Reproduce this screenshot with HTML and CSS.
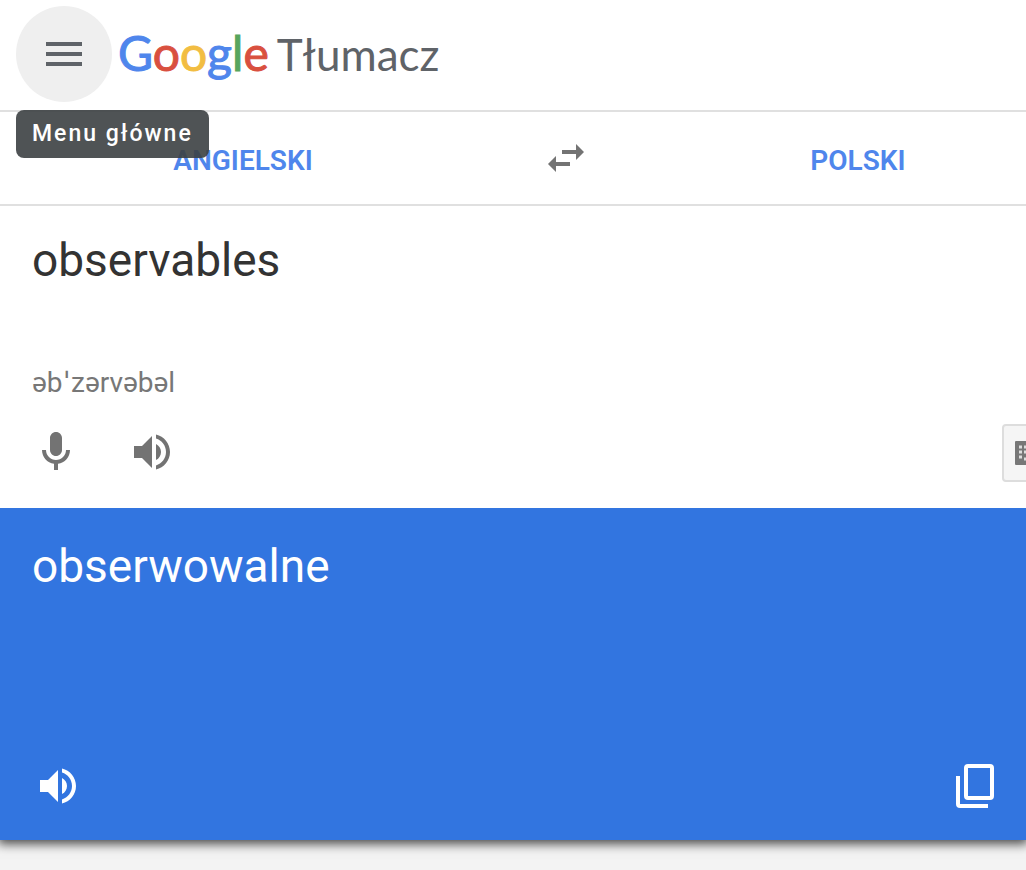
FILE: index.html
```html
<!DOCTYPE html>
<html lang="pl">
<head>
<meta charset="utf-8">
<meta name="viewport" content="width=device-width, initial-scale=1">
<title>Google Tłumacz</title>
<link rel="stylesheet" href="styles.css">
</head>
<body>
<header class="header">
  <div class="menu">
    <button class="menu-button" type="button" aria-describedby="menu-tip" aria-label="Menu główne">
      <svg width="48" height="48" viewBox="0 0 24 24" aria-hidden="true"><path d="M3 18h18v-2H3v2zm0-5h18v-2H3v2zm0-7v2h18V6H3z"/></svg>
    </button>
    <span class="tooltip" id="menu-tip" role="tooltip">Menu główne</span>
  </div>
  <a class="brand" href="#"><span class="brand-google"><span class="blue">G</span><span class="red">o</span><span class="yellow">o</span><span class="blue">g</span><span class="green">l</span><span class="red">e</span></span><span class="brand-product">Tłumacz</span></a>
</header>
<main>
  <div class="languages">
    <button class="language" type="button">ANGIELSKI</button>
    <button class="swap" type="button" aria-label="Zamień języki">
      <svg width="48" height="48" viewBox="0 0 24 24" aria-hidden="true"><path d="M6.99 11L3 15l3.99 4v-3H14v-2H6.99v-3zM21 9l-3.990-4v3H10v2h7.010v3L21 9z"/></svg>
    </button>
    <button class="language" type="button">POLSKI</button>
  </div>
  <section class="source">
    <textarea class="source-text" aria-label="Tekst źródłowy" spellcheck="false" rows="1">observables</textarea>
    <p class="phonetic">əb<span class="stress">ˈ</span>zərvəbəl</p>
    <div class="source-tools">
      <button class="tool" type="button" aria-label="Mów">
        <svg width="48" height="48" viewBox="0 0 24 24" aria-hidden="true"><path d="M12 14c1.660 0 3-1.340 3-3V5c0-1.660-1.340-3-3-3S9 3.340 9 5v6c0 1.660 1.340 3 3 3zM17 11c0 2.760-2.240 5-5 5s-5-2.240-5-5H5c0 3.530 2.610 6.430 6 6.920V21h2v-3.080c3.390-.49 6-3.390 6-6.920h-2z"/></svg>
      </button>
      <button class="tool" type="button" aria-label="Odsłuchaj">
        <svg width="48" height="48" viewBox="0 0 24 24" aria-hidden="true"><path d="M3 9v6h4l5 5V4L7 9H3zm13.500 3c0-1.770-1-3.290-2.500-4.030v8.050c1.500-.73 2.500-2.250 2.500-4.020zM14 3.230v2.060c2.890.86 5 3.540 5 6.710s-2.110 5.850-5 6.710v2.060c4.010-.91 7-4.490 7-8.770s-2.990-7.860-7-8.770z"/></svg>
      </button>
      <button class="keyboard" type="button" aria-label="Klawiatura">
        <svg width="40" height="24" viewBox="0 0 40 24" aria-hidden="true">
          <rect width="40" height="24" rx="1" fill="#777"/>
          <path d="M4 6h32M4 11h32M4 16h4" stroke="#ddd" stroke-width="3" stroke-dasharray="3 2"/>
          <path d="M9 18h22" stroke="#ddd" stroke-width="3"/>
        </svg>
      </button>
    </div>
  </section>
  <section class="target">
    <p class="target-text">obserwowalne</p>
    <div class="target-tools">
      <button class="tool" type="button" aria-label="Odsłuchaj tłumaczenie">
        <svg width="48" height="48" viewBox="0 0 24 24" aria-hidden="true"><path d="M3 9v6h4l5 5V4L7 9H3zm13.500 3c0-1.770-1-3.290-2.500-4.030v8.050c1.500-.73 2.500-2.250 2.500-4.020zM14 3.230v2.060c2.890.86 5 3.540 5 6.710s-2.110 5.850-5 6.710v2.060c4.010-.91 7-4.490 7-8.770s-2.990-7.860-7-8.770z"/></svg>
      </button>
      <button class="tool" type="button" aria-label="Kopiuj tłumaczenie">
        <svg width="40" height="44" viewBox="0 0 40 44" aria-hidden="true" fill="none" stroke="#fff" stroke-width="4"><rect x="10" y="2" width="26" height="32" rx="2"/><path d="M2 12v28q0 2 2 2h28"/></svg>
      </button>
    </div>
  </section>
</main>
</body>
</html>
```
FILE: styles.css
```css
* {
  box-sizing: border-box;
}

body {
  margin: 0;
  min-height: 100vh;
  overflow-x: hidden;
  background: #f3f3f3;
  font-family: Roboto, "Noto Sans", sans-serif;
}

p {
  margin: 0;
}

button {
  display: flex;
  align-items: center;
  justify-content: center;
  padding: 0;
  border: 0;
  background: none;
  font-family: inherit;
  cursor: pointer;
}

svg {
  display: block;
}

.header {
  display: flex;
  align-items: center;
  gap: 6px;
  padding: 6px 16px 8px;
  border-bottom: 2px solid #e0e0e0;
  background: #fff;
}

.menu {
  position: relative;
}

.menu-button {
  width: 96px;
  height: 96px;
  border-radius: 50%;
  background: #efefef;
  fill: #5f6368;
}

.tooltip {
  position: absolute;
  z-index: 2;
  top: 104px;
  left: 0;
  padding: 0 16px;
  border-radius: 8px;
  background: rgba(60, 64, 67, 0.9);
  color: #fff;
  font-size: 23px;
  font-weight: 500;
  line-height: 48px;
  letter-spacing: 2px;
  white-space: nowrap;
}

.brand {
  display: flex;
  align-items: baseline;
  gap: 8px;
  padding-bottom: 2px;
  font-family: Lato, sans-serif;
  line-height: 56px;
  text-decoration: none;
}

.brand-google {
  font-size: 48px;
  -webkit-text-stroke: 1px;
}

.brand-product {
  color: #5f6368;
  font-size: 44px;
}

.blue {
  color: #4f86ec;
}

.red {
  color: #d9503f;
}

.yellow {
  color: #f2bd42;
}

.green {
  color: #58a55c;
}

.languages {
  display: grid;
  grid-template-columns: 486fr 160fr 424fr;
  width: calc(100% + 44px);
  height: 94px;
  border-bottom: 2px solid #e0e0e0;
  background: #fff;
}

.language {
  padding-top: 4px;
  color: #4f86ec;
  font-size: 28px;
  font-weight: 600;
}

.swap {
  fill: #737373;
}

.source {
  position: relative;
  z-index: 1;
  padding: 24px 0 26px 32px;
  background: #fff;
}

.source-text {
  display: block;
  width: 100%;
  height: 136px;
  padding: 0;
  border: 0;
  outline: 0;
  resize: none;
  background: none;
  color: #333;
  font-family: inherit;
  font-size: 46px;
  line-height: 60px;
}

.phonetic {
  color: #777;
  font-size: 28px;
  line-height: 34px;
}

.stress {
  padding: 0 2px;
}

.source-tools {
  display: flex;
  align-items: center;
  gap: 48px;
  margin-top: 24px;
  overflow: hidden;
  fill: #737373;
}

.source-tools .tool {
  padding-bottom: 2px;
}

.keyboard {
  flex: none;
  width: 66px;
  height: 58px;
  margin-left: auto;
  margin-right: -42px;
  border: 2px solid #ddd;
  border-radius: 4px;
  background: #f5f5f5;
}

.target {
  display: flex;
  flex-direction: column;
  justify-content: space-between;
  min-height: 332px;
  padding: 28px 30px 30px 34px;
  background: #3275e0;
  box-shadow: 0 2px 10px 2px rgba(0, 0, 0, 0.7);
  color: #fff;
}

.target-text {
  margin-left: -2px;
  font-size: 46px;
  line-height: 60px;
}

.target-tools {
  display: flex;
  align-items: center;
  justify-content: space-between;
  fill: #fff;
}
```
